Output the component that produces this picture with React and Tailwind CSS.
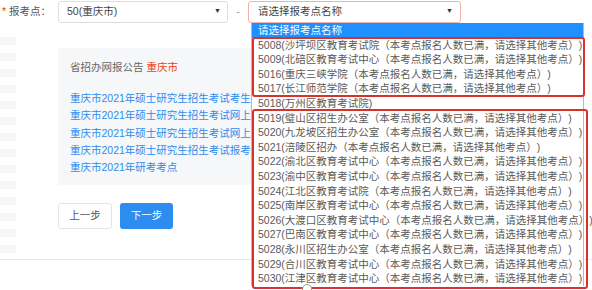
import { useState } from "react";

const links = [
  "重庆市2021年硕士研究生招生考试考生报名须知",
  "重庆市2021年硕士研究生招生考试网上支付说明",
  "重庆市2021年硕士研究生招生考试网上确认公告",
  "重庆市2021年硕士研究生招生考试报考点公告",
  "重庆市2021年研考考点",
];

const full = "（本考点报名人数已满，请选择其他考点）)";

const options = [
  { code: "5008", name: "沙坪坝区教育考试院", full: true },
  { code: "5009", name: "北碚区教育考试中心", full: true },
  { code: "5016", name: "重庆三峡学院", full: true },
  { code: "5017", name: "长江师范学院", full: true },
  { code: "5018", name: "万州区教育考试院", full: false },
  { code: "5019", name: "璧山区招生办公室", full: true },
  { code: "5020", name: "九龙坡区招生办公室", full: true },
  { code: "5021", name: "涪陵区招办", full: true },
  { code: "5022", name: "渝北区教育考试中心", full: true },
  { code: "5023", name: "渝中区教育考试中心", full: true },
  { code: "5024", name: "江北区教育考试院", full: true },
  { code: "5025", name: "南岸区教育考试中心", full: true },
  { code: "5026", name: "大渡口区教育考试中心", full: true },
  { code: "5027", name: "巴南区教育考试中心", full: true },
  { code: "5028", name: "永川区招生办公室", full: true },
  { code: "5029", name: "合川区教育考试中心", full: true },
  { code: "5030", name: "江津区教育考试中心", full: true },
];

export default function App() {
  const [open] = useState(true);

  return (
    <div
      className="relative w-[592px] h-[290px] overflow-hidden bg-white text-[#555] text-[10.5px] [text-spacing-trim:space-all]"
      style={{ fontFamily: '"Liberation Sans", "Noto Sans CJK SC", sans-serif' }}
    >
      {/* faint sidebar stripes */}
      <div className="absolute left-0 top-[37px] flex flex-col gap-[8px]">
        {Array.from({ length: 14 }).map((_, i) => (
          <div key={i} className="w-[16px] h-[8px] bg-[#f6f6f6]" />
        ))}
      </div>

      {/* FORM ROW */}
      <div className="relative flex items-center h-[23px]">
        <div className="w-[58px] pl-[2px] flex items-center">
          <span className="text-[#ed4014] mr-[3px]">*</span>
          <span>报考点：</span>
        </div>
        <div className="w-[170px] h-[22px] border border-[#dcdee2] rounded-[3px] flex items-center justify-between pl-[8px] pr-[6px] text-[#444]">
          <span>50(重庆市)</span>
          <span className="text-[7px] text-[#333]">▼</span>
        </div>
        <div className="w-[20px] text-center text-[#999]">-</div>
        <div className="w-[213px] h-[22px] border border-[#f0b2a8] rounded-[3px] flex items-center justify-between pl-[9px] pr-[7px] text-[#444]">
          <span>请选择报考点名称</span>
          <span className="text-[7px] text-[#333]">▼</span>
        </div>
      </div>

      {/* NOTICE PANEL */}
      <div className="ml-[58px] mt-[25px] w-[420px] h-[137px] bg-[#f6f7f9] pl-[12px] pt-[12px]">
        <div className="h-[15px] leading-[15px] text-[#666]">
          省招办网报公告 <span className="text-[#ed4014]">重庆市</span>
        </div>
        <div className="mt-[15px] flex flex-col">
          {links.map((t) => (
            <div key={t} className="h-[17.3px] leading-[17.3px] text-[#2d8cf0] whitespace-nowrap">
              {t}
            </div>
          ))}
        </div>
      </div>

      {/* BUTTONS */}
      <div className="ml-[58px] mt-[18px] flex gap-[8px]">
        <button className="w-[54px] h-[26px] border border-[#e3e5e8] rounded-[3px] bg-white text-[#555]">
          上一步
        </button>
        <button className="w-[53px] h-[26px] rounded-[3px] bg-[#2d8cf0] text-white">
          下一步
        </button>
      </div>

      <div className="mt-[30px] h-px bg-[#e8e8e8]" />

      {/* NATIVE DROPDOWN */}
      {open && (
        <div className="absolute left-[251px] top-[23px] w-[333px] bg-white border-l border-r border-[#b9b9b9] text-[#5a5a5a]">
          <div className="h-[14.6px] leading-[14.6px] bg-[#1e90ff] text-white pl-[6px] overflow-hidden">
            请选择报考点名称
          </div>
          {options.map((o) => (
            <div key={o.code} className="h-[14.6px] leading-[14.6px] pl-[6px] whitespace-nowrap">
              {o.code}({o.name}
              {o.full ? full : ")"}
            </div>
          ))}
        </div>
      )}

      {/* annotation boxes */}
      <div className="absolute left-[252px] top-[37px] w-[333px] h-[60px] border-2 border-[#d8322c] rounded-[3px]" />
      <div className="absolute left-[252px] top-[109px] w-[336px] h-[180px] border-2 border-[#d8322c] rounded-[3px]" />
      <div className="absolute left-[302px] top-[284px] w-[10px] h-[10px] rounded-full border border-[#999] bg-white" />
    </div>
  );
}
